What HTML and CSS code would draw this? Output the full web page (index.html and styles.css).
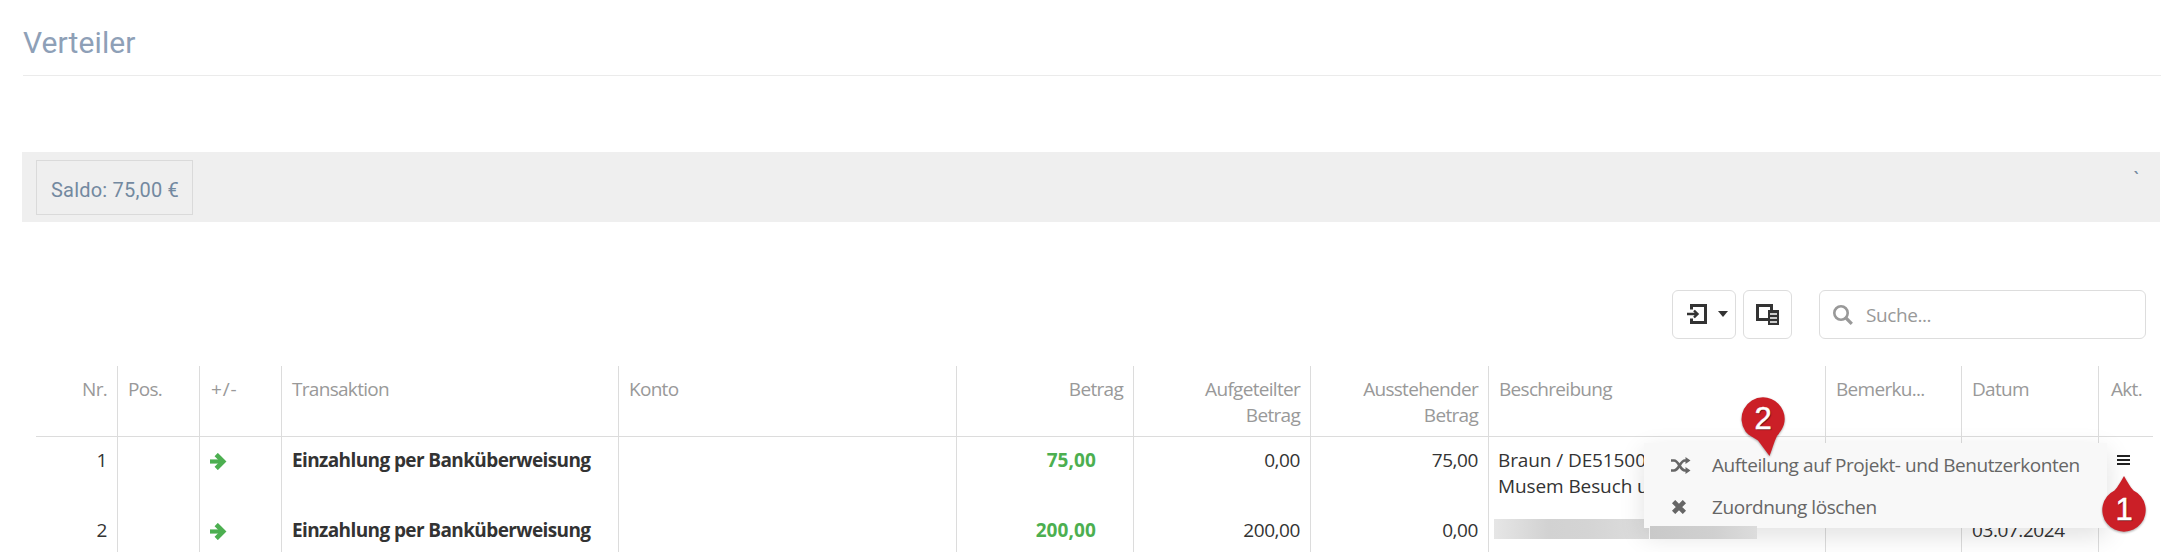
FILE: index.html
```html
<!DOCTYPE html>
<html lang="de">

<head>
    <meta charset="UTF-8">
    <meta name="viewport" content="width=device-width, initial-scale=1.0">
    <title>Verteiler</title>
    <link rel="stylesheet" href="styles.css">
</head>

<body>
    <h1 class="title">Verteiler</h1>

    <div class="saldoBar">
        <div class="saldo">Saldo: 75,00 €</div>
        <span class="tick">`</span>
    </div>

    <div class="toolbar">
        <button class="btn btnExport">
            <svg width="20" height="20" viewBox="0 0 20 20" fill="none" stroke="#333">
                <path d="M4.500 5.500V1.500H18.500V18.500H4.500V14.500" stroke-width="3" />
                <path d="M0 10H10M7 6.500L10.500 10L7 13.500" stroke-width="2.400" />
            </svg>
            <span class="caret"></span>
        </button>
        <button class="btn btnColumns">
            <svg width="23" height="21" viewBox="0 0 23 21">
                <path d="M0 0H17V6H14V3H3V14H12V17H0Z" fill="#333" />
                <path d="M12 6H23V21H12Z" fill="#333" />
                <path d="M14 10H21M14 14H21M14 18H21" stroke="#fff" stroke-width="1.500" />
            </svg>
        </button>
        <div class="search">
            <svg width="20" height="20" viewBox="0 0 20 20" fill="none" stroke="#999">
                <circle cx="8" cy="8" r="6.700" stroke-width="2.600" />
                <path d="M12.500 12.500L18.800 18.800" stroke-width="3.200" />
            </svg>
            <span>Suche...</span>
        </div>
    </div>

    <table class="grid">
        <colgroup>
            <col class="colSmall">
            <col class="colSmall">
            <col class="colSmall">
            <col class="colWide">
            <col class="colKonto">
            <col class="colBetrag">
            <col class="colBetrag">
            <col class="colOffen">
            <col class="colWide">
            <col class="colBem">
            <col class="colDatum">
            <col class="colAkt">
        </colgroup>
        <thead>
            <tr>
                <th class="right">Nr.</th>
                <th>Pos.</th>
                <th class="sign">+/-</th>
                <th>Transaktion</th>
                <th>Konto</th>
                <th class="right">Betrag</th>
                <th class="right">Aufgeteilter<br>Betrag</th>
                <th class="right">Ausstehender<br>Betrag</th>
                <th>Beschreibung</th>
                <th>Bemerku...</th>
                <th>Datum</th>
                <th class="akt">Akt.</th>
            </tr>
        </thead>
        <tbody>
            <tr>
                <td class="right">1</td>
                <td></td>
                <td class="arrowCell">
                    <svg class="arrow" width="17" height="17" viewBox="0 0 17 17" fill="none" stroke="#4caf50">
                        <path d="M0 8.500H13" stroke-width="4.200" />
                        <path d="M6.200 1.500L13.200 8.500L6.200 15.500" stroke-width="4.600" />
                    </svg>
                </td>
                <td class="bold">Einzahlung per Banküberweisung</td>
                <td></td>
                <td class="amount">75,00</td>
                <td class="right">0,00</td>
                <td class="right">75,00</td>
                <td class="text">Braun / DE515001<br>Musem Besuch un</td>
                <td></td>
                <td></td>
                <td class="menuCell">
                    <svg class="burger" width="13" height="10" viewBox="0 0 13 10" fill="#222">
                        <path d="M0 0H13V2H0ZM0 4H13V6H0ZM0 8H13V10H0Z" />
                    </svg>
                </td>
            </tr>
            <tr>
                <td class="right">2</td>
                <td></td>
                <td class="arrowCell">
                    <svg class="arrow" width="17" height="17" viewBox="0 0 17 17" fill="none" stroke="#4caf50">
                        <path d="M0 8.500H13" stroke-width="4.200" />
                        <path d="M6.200 1.500L13.200 8.500L6.200 15.500" stroke-width="4.600" />
                    </svg>
                </td>
                <td class="bold">Einzahlung per Banküberweisung</td>
                <td></td>
                <td class="amount">200,00</td>
                <td class="right">200,00</td>
                <td class="right">0,00</td>
                <td></td>
                <td></td>
                <td>03.07.2024</td>
                <td></td>
            </tr>
        </tbody>
    </table>

    <div class="mask maskName"></div>

    <div class="menu">
        <div class="menuItem">
            <svg width="20" height="17" viewBox="0 0 20 17" fill="none" stroke="#666" stroke-width="2.700">
                <path d="M0 3.500H3C8 3.500 9 13.500 14 13.500H16" />
                <path d="M0 13.500H3C8 13.500 9 3.500 14 3.500H16" />
                <path d="M14.500 0L19.500 3.500L14.500 7ZM14.500 10L19.500 13.500L14.500 17Z" fill="#666" stroke="none" />
            </svg>
            <span>Aufteilung auf Projekt- und Benutzerkonten</span>
        </div>
        <div class="menuItem">
            <svg width="20" height="14" viewBox="0 0 20 14" fill="none" stroke="#666" stroke-width="4.600">
                <path d="M2.600 1.600L13.400 12.400M13.400 1.600L2.600 12.400" />
            </svg>
            <span>Zuordnung löschen</span>
        </div>
    </div>

    <div class="mask maskIban"></div>

    <div class="pin pinTwo">
        <svg width="44" height="60" viewBox="0 0 44 60">
            <path d="M22 0.300A21.700 21.700 0 0 1 43.700 22C43.700 30 39 35 36 39C33 45 31 53 28.500 59L17 43.500C13 40.500 8 39 4.500 34.500A21.700 21.700 0 0 1 22 0.300Z" fill="#cb1f27" />
        </svg>
        <span class="pinText">2</span>
    </div>
    <div class="pin pinOne">
        <svg width="44" height="56" viewBox="0 0 44 56">
            <path d="M22 0C25 5 28 11 31.500 14.500A21.700 21.700 0 1 1 12.500 14.500C16 11 19 5 22 0Z" fill="#cb1f27" />
        </svg>
        <span class="pinText">1</span>
    </div>
</body>

</html>
```
FILE: styles.css
```css
*{
    margin: 0;
    padding: 0;
    box-sizing: border-box;
}

body{
    width: 2161px;
    height: 552px;
    position: relative;
    overflow: hidden;
    background-color: #fff;
    color: #333;
    font-family: "Open Sans", "Noto Sans", sans-serif;
    font-size: 19px;
    line-height: 26px;
    letter-spacing: -0.42px;
}

.title{
    height: 76px;
    margin-left: 23px;
    padding-top: 23px;
    border-bottom: 1px solid #ebebeb;
    font-family: Roboto, sans-serif;
    font-size: 30px;
    font-weight: normal;
    line-height: 40px;
    letter-spacing: 0.1px;
    color: #8ea0b7;
}

.saldoBar{
    display: flex;
    justify-content: space-between;
    height: 70px;
    margin: 76px 1px 0 22px;
    padding: 8px 20px 7px 14px;
    background-color: #efefef;
    font-family: Roboto, sans-serif;
    font-size: 20px;
    letter-spacing: 0.2px;
    color: #7389a0;
}

.saldo{
    width: 157px;
    padding-left: 14px;
    border: 1px solid #dadada;
    line-height: 58px;
}

.tick{
    padding-top: 6px;
    font-size: 20px;
}

.toolbar{
    display: flex;
    justify-content: flex-end;
    margin-top: 68px;
    padding-right: 15px;
}

.btn, .search{
    display: flex;
    align-items: center;
    height: 49px;
    border: 1px solid #ddd;
    border-radius: 6px;
    background-color: #fff;
}

.btnExport{
    width: 64px;
    margin-right: 7px;
    padding-left: 14px;
    padding-bottom: 1px;
}

.btnColumns{
    width: 49px;
    margin-right: 27px;
    padding-left: 12px;
}

.caret{
    margin-left: 11px;
    border-left: 5.5px solid transparent;
    border-right: 5.5px solid transparent;
    border-top: 6px solid #333;
}

.search{
    width: 327px;
    padding-left: 13px;
    color: #999;
}

.search svg{
    margin-right: 13px;
}

.grid{
    width: 2117px;
    margin: 27px 0 0 36px;
    table-layout: fixed;
    border-collapse: separate;
    border-spacing: 0;
}

.colSmall{
    width: 82px;
}

.colWide{
    width: 337px;
}

.colKonto{
    width: 338px;
}

.colBetrag{
    width: 177px;
}

.colOffen{
    width: 178px;
}

.colBem{
    width: 136px;
}

.colDatum{
    width: 137px;
}

.colAkt{
    width: 54px;
}

.grid th, .grid td{
    height: 70px;
    padding: 10px 10px 0 10px;
    border-right: 1px solid #dcdcdc;
    text-align: left;
    vertical-align: top;
    white-space: nowrap;
}

.grid th{
    height: 71px;
    border-bottom: 1px solid #dcdcdc;
    color: #999;
    font-weight: normal;
    letter-spacing: -0.7px;
}

.grid th:last-child, .grid td:last-child{
    border-right: none;
}

.grid .right{
    text-align: right;
}

.grid .sign{
    padding-left: 11px;
    letter-spacing: 0.8px;
}

.grid .akt{
    padding-left: 12px;
    padding-right: 0;
}

.grid .bold{
    font-weight: bold;
    letter-spacing: -0.61px;
}

.grid .text{
    padding-left: 9px;
    letter-spacing: -0.1px;
}

.grid .amount{
    padding-right: 37px;
    text-align: right;
    font-weight: bold;
    letter-spacing: 0.1px;
    color: #4caf50;
}

.grid .arrowCell{
    padding-top: 16px;
}

.grid .menuCell{
    padding: 18px 0 0 18px;
}

.arrow, .burger{
    display: block;
}

/* row menu */
.menu{
    position: absolute;
    left: 1644px;
    top: 443px;
    width: 463px;
    height: 85px;
    padding-top: 1px;
    background-color: #f8f8f8;
    box-shadow: 0 8px 24px rgba(0, 0, 0, .12);
    color: #666;
}

.menuItem{
    display: flex;
    align-items: center;
    height: 42px;
    padding-left: 27px;
    white-space: nowrap;
}

.menuItem svg{
    margin-right: 21px;
}

.mask{
    position: absolute;
}

.maskName{
    left: 1494px;
    top: 519px;
    width: 155px;
    height: 20px;
    background: linear-gradient(90deg, #e6e6e6, #d2d2d2 35%, #d4d4d4 60%, #dedede);
}

.maskIban{
    left: 1650px;
    top: 526px;
    width: 107px;
    height: 13px;
    background: linear-gradient(90deg, #c9c9c9, #d0d0d0 60%, #dcdcdc);
}

/* numbered markers */
.pin{
    position: absolute;
    width: 44px;
    color: #fff;
    font-family: "Liberation Sans", sans-serif;
    font-size: 31px;
    text-align: center;
    letter-spacing: 0;
}

.pin svg{
    display: block;
    filter: drop-shadow(0 1px 1px rgba(0, 0, 0, .35));
}

.pinText{
    position: absolute;
    left: 0;
    width: 44px;
    line-height: 44px;
    -webkit-text-stroke: 0.5px #fff;
    text-shadow: 1px 1px 1px rgba(0, 0, 0, .5);
}

.pinTwo{
    left: 1741px;
    top: 397px;
}

.pinTwo .pinText{
    top: 0;
}

.pinOne{
    left: 2102px;
    top: 476px;
}

.pinOne .pinText{
    top: 12px;
}
```
